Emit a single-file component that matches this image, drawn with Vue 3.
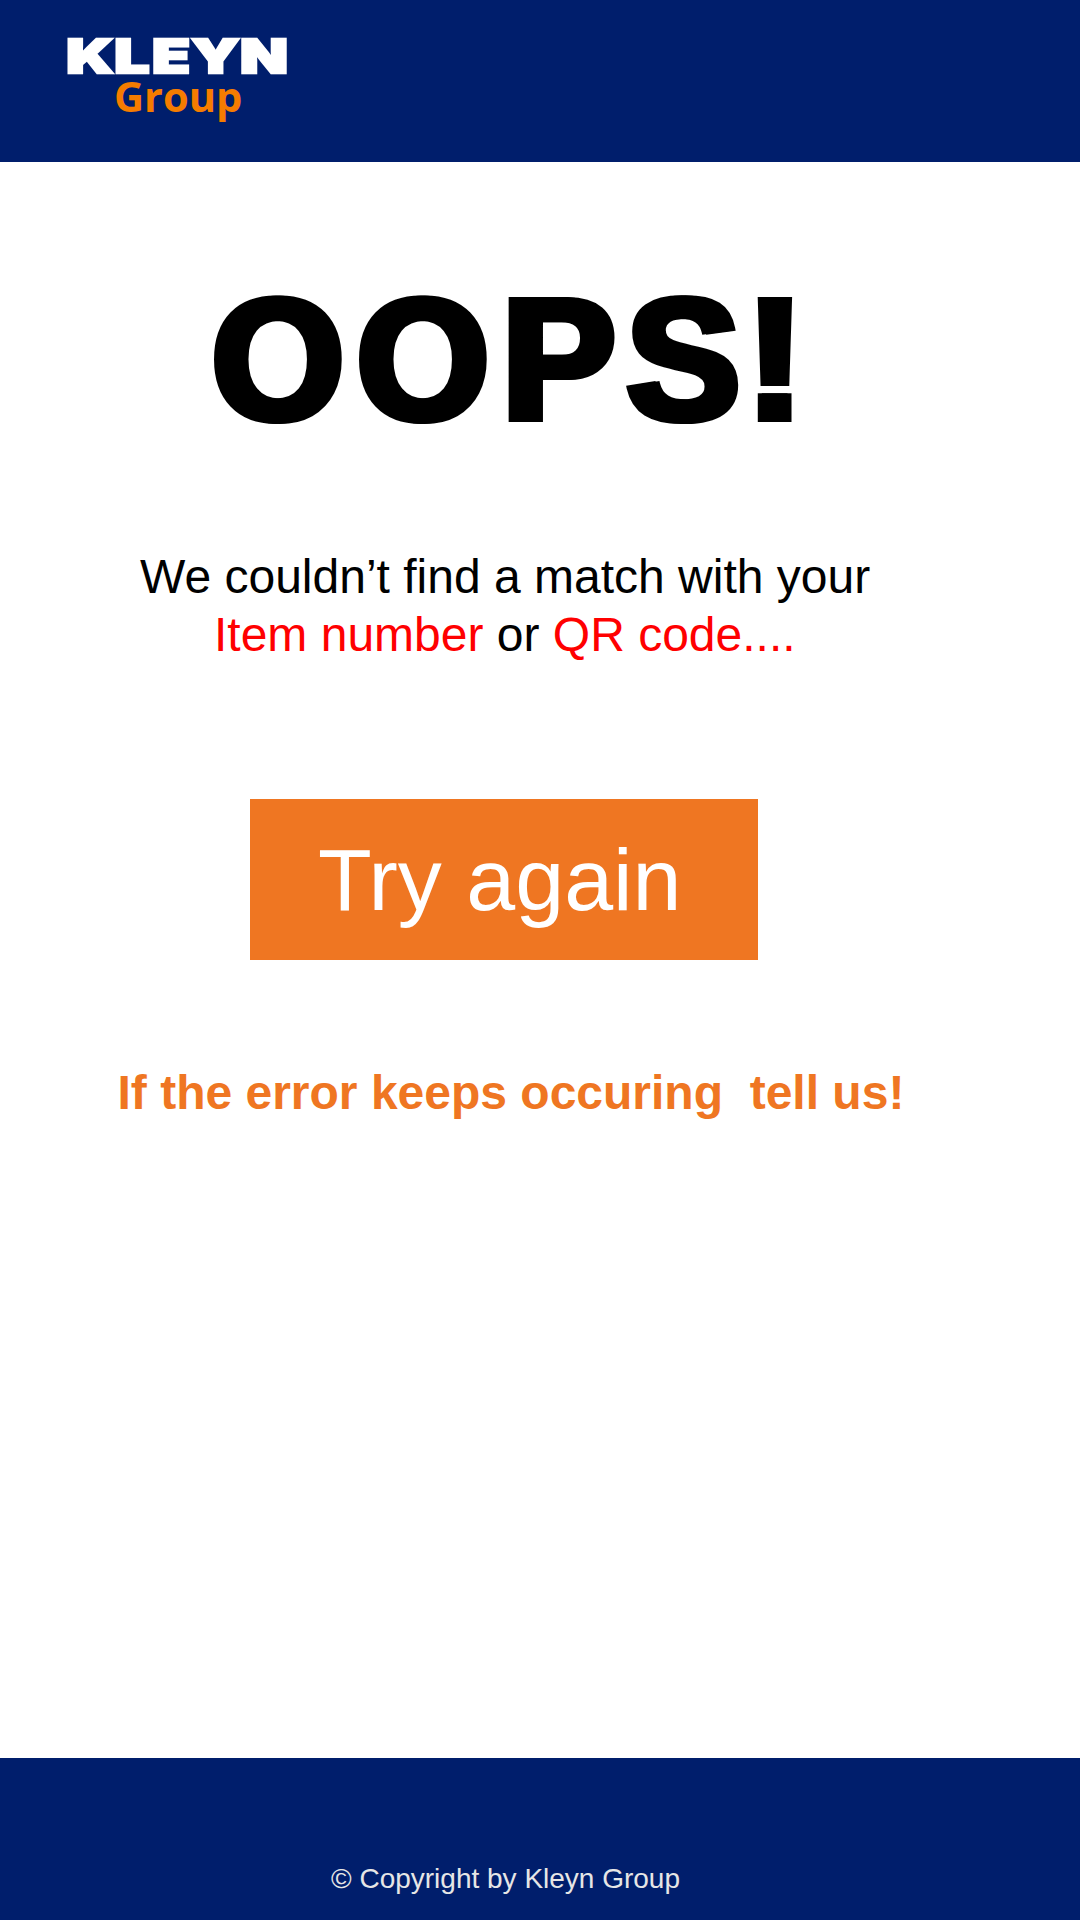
<script setup>
const mark = '©'
</script>

<template>
  <div class="page">
    <header class="top">
      <svg class="logo" width="240" height="110" viewBox="0 0 240 110" role="img" aria-label="Kleyn Group">
        <g transform="scale(1.35 1)">
          <text class="brand" x="10.6 46.2 74.1 103.2 139.3" y="42.8">KLEYN</text>
        </g>
        <text class="group" x="62" y="82">Group</text>
      </svg>
    </header>

    <main class="content">
      <h1 class="title">
        <svg width="620" height="150" viewBox="0 0 620 150">
          <g transform="scale(0.98 1)">
            <text class="oops" x="10.2 158.1 306.4 433.5 555.9" y="139">OOPS!</text>
          </g>
        </svg>
      </h1>

      <p class="message">
        <span class="line">We couldn’t find a match with your</span>
        <span class="line second"><em>Item number</em> or <em>QR code....</em></span>
      </p>

      <button class="retry" type="button">Try again</button>

      <a class="report">If the error keeps occuring&nbsp; tell us!</a>
    </main>

    <footer class="bottom">{{ mark }} Copyright by Kleyn Group</footer>
  </div>
</template>

<style>
body {
  margin: 0;
  background: #fff;
}
</style>

<style scoped>
.page {
  display: flex;
  flex-direction: column;
  width: 1080px;
  height: 1920px;
  overflow: hidden;
  background: #fff;
  font-family: "Liberation Sans", Arial, sans-serif;
}

.top {
  box-sizing: border-box;
  height: 162px;
  padding: 30px 0 0 52px;
  background: #001e6c;
}

.logo {
  display: block;
  overflow: visible;
}

.brand {
  font-family: Inter, sans-serif;
  font-weight: 900;
  font-size: 46.2px;
  fill: #fff;
  stroke: #fff;
  stroke-width: 2.4px;
}

.group {
  font-family: "Open Sans", sans-serif;
  font-weight: 700;
  font-size: 41.6px;
  fill: #f57c00;
}

.content {
  display: flex;
  flex: 1;
  flex-direction: column;
  align-items: flex-start;
}

.title {
  margin: 118px 0 0 200px;
  height: 150px;
}

.title svg {
  display: block;
  overflow: visible;
  filter: drop-shadow(4.9px 0 0 #000);
}

.oops {
  font-family: "Liberation Sans", Arial, sans-serif;
  font-weight: 700;
  font-size: 173px;
  fill: #000;
  stroke: #000;
  stroke-width: 6px;
}

.message {
  margin: 118px 0 0 140px;
  font-size: 48px;
  line-height: 58px;
  white-space: nowrap;
  color: #000;
}

.line {
  display: block;
}

.second {
  padding-left: 74px;
}

.message em {
  font-style: normal;
  color: #f00;
}

.retry {
  width: 508px;
  height: 161px;
  margin: 135px 0 0 250px;
  padding: 0 0 0 68px;
  border: 0;
  background: #ef7622;
  color: #fff;
  font: 88px/161px "Liberation Sans", Arial, sans-serif;
  text-align: left;
}

.report {
  margin: 104px 0 0 117.5px;
  font-size: 48px;
  font-weight: 700;
  line-height: 58px;
  white-space: nowrap;
  color: #ef7622;
}

.bottom {
  box-sizing: border-box;
  height: 162px;
  padding: 105px 0 0 331px;
  background: #001e6c;
  color: #e6e6e6;
  font-size: 28px;
  line-height: 32px;
}
</style>
